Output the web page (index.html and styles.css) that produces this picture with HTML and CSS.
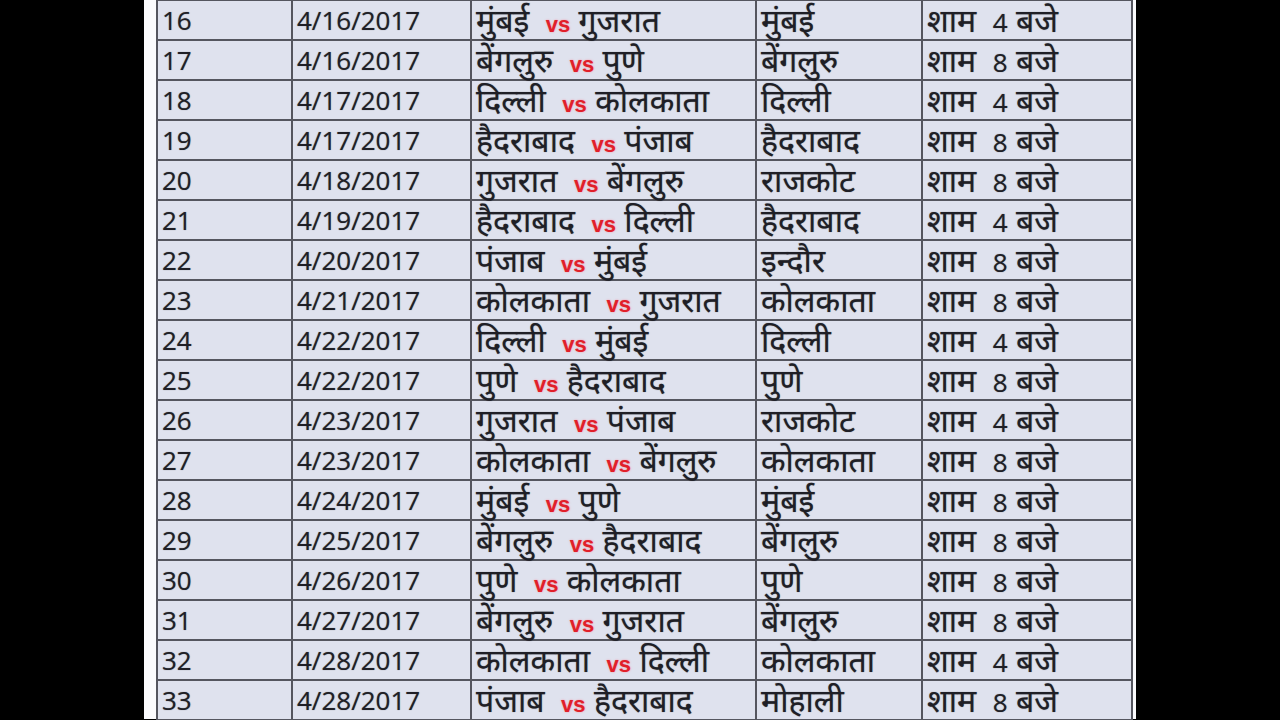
FILE: index.html
```html
<!DOCTYPE html>
<html lang="hi">
<head>
<meta charset="utf-8">
<title>IPL 2017 Schedule</title>
<link rel="stylesheet" href="styles.css">
</head>
<body>
<div class="sheet">
<table class="sched">
<colgroup><col class="c-no"><col class="c-date"><col class="c-match"><col class="c-venue"><col class="c-time"></colgroup>
<tbody>
<tr><td>16</td><td>4/16/2017</td><td class="hi">मुंबई&nbsp;&nbsp;<span class="vs">vs</span> गुजरात</td><td class="hi">मुंबई</td><td class="hi">शाम&nbsp;&nbsp;<span class="num">4</span> बजे</td></tr>
<tr><td>17</td><td>4/16/2017</td><td class="hi">बेंगलुरु&nbsp;&nbsp;<span class="vs">vs</span> पुणे</td><td class="hi">बेंगलुरु</td><td class="hi">शाम&nbsp;&nbsp;<span class="num">8</span> बजे</td></tr>
<tr><td>18</td><td>4/17/2017</td><td class="hi">दिल्ली&nbsp;&nbsp;<span class="vs">vs</span> कोलकाता</td><td class="hi">दिल्ली</td><td class="hi">शाम&nbsp;&nbsp;<span class="num">4</span> बजे</td></tr>
<tr><td>19</td><td>4/17/2017</td><td class="hi">हैदराबाद&nbsp;&nbsp;<span class="vs">vs</span> पंजाब</td><td class="hi">हैदराबाद</td><td class="hi">शाम&nbsp;&nbsp;<span class="num">8</span> बजे</td></tr>
<tr><td>20</td><td>4/18/2017</td><td class="hi">गुजरात&nbsp;&nbsp;<span class="vs">vs</span> बेंगलुरु</td><td class="hi">राजकोट</td><td class="hi">शाम&nbsp;&nbsp;<span class="num">8</span> बजे</td></tr>
<tr><td>21</td><td>4/19/2017</td><td class="hi">हैदराबाद&nbsp;&nbsp;<span class="vs">vs</span> दिल्ली</td><td class="hi">हैदराबाद</td><td class="hi">शाम&nbsp;&nbsp;<span class="num">4</span> बजे</td></tr>
<tr><td>22</td><td>4/20/2017</td><td class="hi">पंजाब&nbsp;&nbsp;<span class="vs">vs</span> मुंबई</td><td class="hi">इन्दौर</td><td class="hi">शाम&nbsp;&nbsp;<span class="num">8</span> बजे</td></tr>
<tr><td>23</td><td>4/21/2017</td><td class="hi">कोलकाता&nbsp;&nbsp;<span class="vs">vs</span> गुजरात</td><td class="hi">कोलकाता</td><td class="hi">शाम&nbsp;&nbsp;<span class="num">8</span> बजे</td></tr>
<tr><td>24</td><td>4/22/2017</td><td class="hi">दिल्ली&nbsp;&nbsp;<span class="vs">vs</span> मुंबई</td><td class="hi">दिल्ली</td><td class="hi">शाम&nbsp;&nbsp;<span class="num">4</span> बजे</td></tr>
<tr><td>25</td><td>4/22/2017</td><td class="hi">पुणे&nbsp;&nbsp;<span class="vs">vs</span> हैदराबाद</td><td class="hi">पुणे</td><td class="hi">शाम&nbsp;&nbsp;<span class="num">8</span> बजे</td></tr>
<tr><td>26</td><td>4/23/2017</td><td class="hi">गुजरात&nbsp;&nbsp;<span class="vs">vs</span> पंजाब</td><td class="hi">राजकोट</td><td class="hi">शाम&nbsp;&nbsp;<span class="num">4</span> बजे</td></tr>
<tr><td>27</td><td>4/23/2017</td><td class="hi">कोलकाता&nbsp;&nbsp;<span class="vs">vs</span> बेंगलुरु</td><td class="hi">कोलकाता</td><td class="hi">शाम&nbsp;&nbsp;<span class="num">8</span> बजे</td></tr>
<tr><td>28</td><td>4/24/2017</td><td class="hi">मुंबई&nbsp;&nbsp;<span class="vs">vs</span> पुणे</td><td class="hi">मुंबई</td><td class="hi">शाम&nbsp;&nbsp;<span class="num">8</span> बजे</td></tr>
<tr><td>29</td><td>4/25/2017</td><td class="hi">बेंगलुरु&nbsp;&nbsp;<span class="vs">vs</span> हैदराबाद</td><td class="hi">बेंगलुरु</td><td class="hi">शाम&nbsp;&nbsp;<span class="num">8</span> बजे</td></tr>
<tr><td>30</td><td>4/26/2017</td><td class="hi">पुणे&nbsp;&nbsp;<span class="vs">vs</span> कोलकाता</td><td class="hi">पुणे</td><td class="hi">शाम&nbsp;&nbsp;<span class="num">8</span> बजे</td></tr>
<tr><td>31</td><td>4/27/2017</td><td class="hi">बेंगलुरु&nbsp;&nbsp;<span class="vs">vs</span> गुजरात</td><td class="hi">बेंगलुरु</td><td class="hi">शाम&nbsp;&nbsp;<span class="num">8</span> बजे</td></tr>
<tr><td>32</td><td>4/28/2017</td><td class="hi">कोलकाता&nbsp;&nbsp;<span class="vs">vs</span> दिल्ली</td><td class="hi">कोलकाता</td><td class="hi">शाम&nbsp;&nbsp;<span class="num">4</span> बजे</td></tr>
<tr><td>33</td><td>4/28/2017</td><td class="hi">पंजाब&nbsp;&nbsp;<span class="vs">vs</span> हैदराबाद</td><td class="hi">मोहाली</td><td class="hi">शाम&nbsp;&nbsp;<span class="num">8</span> बजे</td></tr>
</tbody>
</table>
</div>
</body>
</html>
```
FILE: styles.css
```css
html, body {
  margin: 0;
  padding: 0;
  background: #000;
  height: 100%;
  overflow: hidden;
}
.sheet {
  width: 992px;
  margin: 0 auto;
  padding: 0 5px 0 12px;
  box-sizing: border-box;
  background: #fbfbfd;
  height: 100%;
}
.sched {
  width: 975px;
  table-layout: fixed;
  border-collapse: collapse;
  margin-top: -1px;
  font-family: "Open Sans", "Noto Sans", sans-serif;
  font-size: 26px;
  color: #1f1f26;
  background: #dfe2ee;
  text-shadow: 0 0 1px rgba(20, 20, 30, 0.55);
}
.c-no { width: 135px; }
.c-date { width: 179px; }
.c-match { width: 285px; }
.c-venue { width: 166px; }
.c-time { width: 210px; }
.sched td {
  border: 2px solid #55565f;
  height: 38px;
  padding: 0 4px;
  vertical-align: middle;
  white-space: nowrap;
  line-height: 30px;
}
.sched td.hi {
  font-size: 32px;
  line-height: 30px;
}
.num {
  font-size: 26px;
  line-height: 1;
}
.vs {
  font-family: "Liberation Sans", Arial, sans-serif;
  font-weight: bold;
  font-size: 22px;
  line-height: 1;
  color: #e0202a;
  text-shadow: 0 0 2px rgba(255, 110, 130, 0.7);
}
```
